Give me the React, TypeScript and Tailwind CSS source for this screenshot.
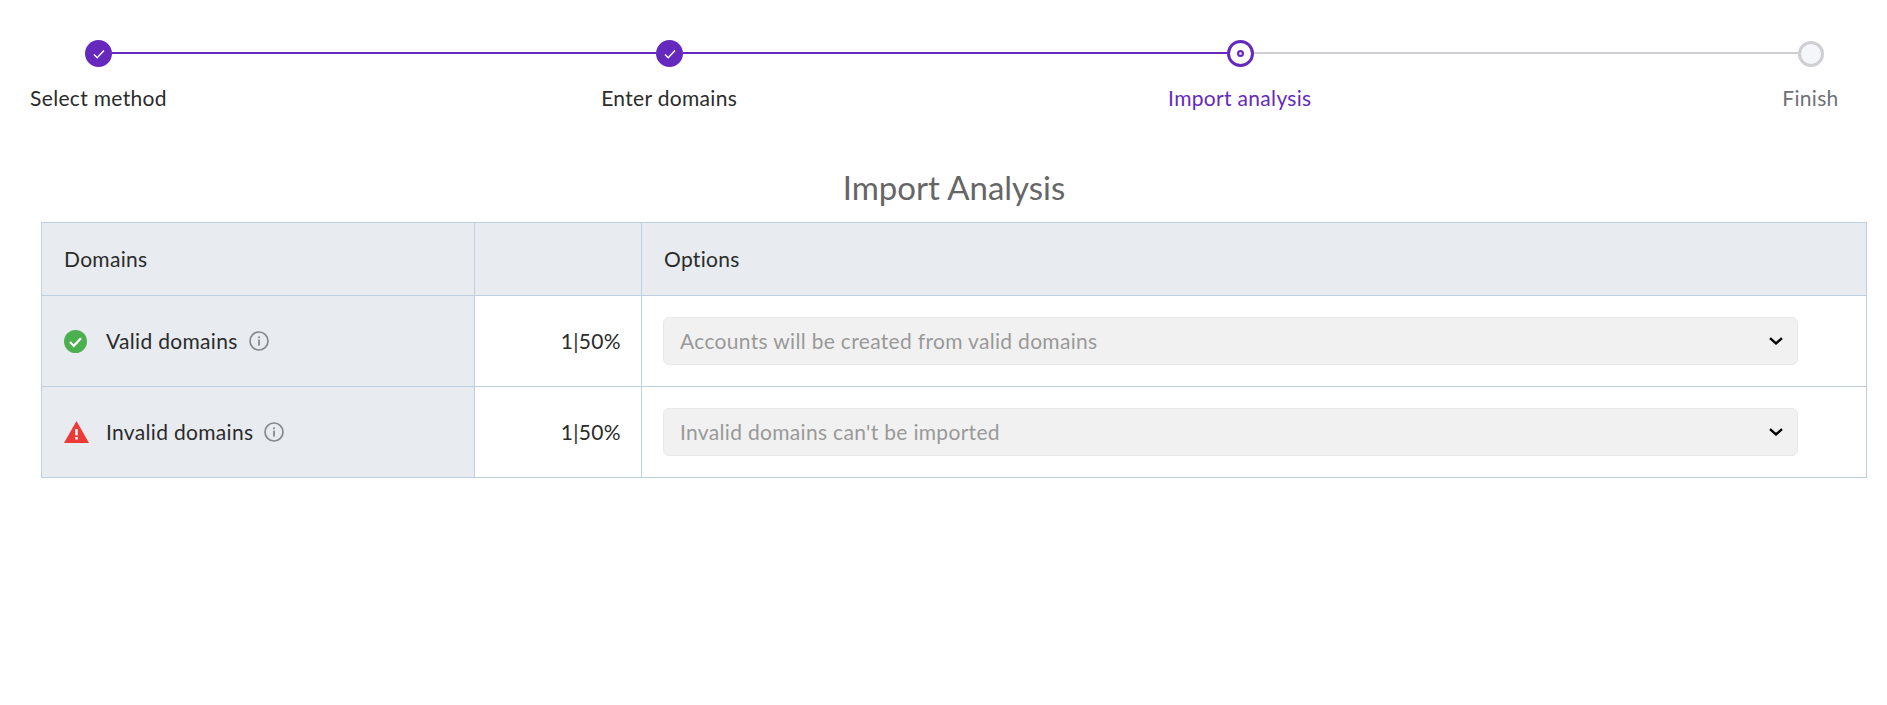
const font = "font-['Lato','Liberation_Sans',sans-serif]";

const steps = [
  { label: "Select method", state: "done" },
  { label: "Enter domains", state: "done" },
  { label: "Import analysis", state: "active" },
  { label: "Finish", state: "todo" },
];

const StepDot = ({ state }: { state: string }) => {
  if (state === "done") {
    return (
      <div className="flex size-[27px] shrink-0 items-center justify-center rounded-full bg-[#6529bd]">
        <svg width="14" height="14" viewBox="0 0 14 14" fill="none" stroke="#fff" strokeWidth="1.4">
          <path d="M2 7.5l3.2 3.2L12 3.6" />
        </svg>
      </div>
    );
  }
  if (state === "active") {
    return (
      <div className="flex size-[27px] shrink-0 items-center justify-center rounded-full border-[3px] border-[#6529bd] bg-white">
        <div className="size-[7px] rounded-full border-2 border-[#6529bd] bg-[#d9c9f0]" />
      </div>
    );
  }
  return <div className="size-[26px] shrink-0 rounded-full border-[3px] border-[#cfcfd3] bg-[#f5f6f9]" />;
};

const Stepper = () => (
  <div className="ml-[30px] w-[1849px] pt-[40px]">
    <div className="flex items-center px-[55px]">
      {steps.map((step, i) => (
        <div key={step.label} className={i < 3 ? "flex flex-1 items-center" : "flex items-center"}>
          <StepDot state={step.state} />
          {i < 3 && (
            <div className={i < 2 ? "mb-[1px] h-[2px] flex-1 bg-[#6529bd]" : "mb-[1px] h-[2px] flex-1 bg-[#cfcfd3]"} />
          )}
        </div>
      ))}
    </div>
    <div className="mt-[19px] flex justify-between">
      {steps.map((step) => (
        <div
          key={step.label}
          className={
            step.state === "active"
              ? "flex w-[137px] justify-center whitespace-nowrap text-[21px] leading-[24px] tracking-[0.32px] text-[#6529bd]"
              : step.state === "todo"
                ? "flex w-[137px] justify-center whitespace-nowrap text-[21px] leading-[24px] tracking-[0.32px] text-[#6c7177]"
                : "flex w-[137px] justify-center whitespace-nowrap text-[21px] leading-[24px] tracking-[0.32px] text-[#2b2b2b]"
          }
        >
          {step.label}
        </div>
      ))}
    </div>
  </div>
);

const InfoIcon = () => (
  <svg width="20" height="20" viewBox="0 0 20 20" fill="none" className="shrink-0">
    <circle cx="10" cy="10" r="9" stroke="#85898f" strokeWidth="1.7" />
    <rect x="9.1" y="8.6" width="1.8" height="6" fill="#85898f" />
    <rect x="9.1" y="5.4" width="1.8" height="1.8" fill="#85898f" />
  </svg>
);

const ValidIcon = () => (
  <svg width="23" height="23" viewBox="0 0 23 23" fill="none" className="shrink-0">
    <circle cx="11.5" cy="11.5" r="11.5" fill="#4caf50" />
    <path d="M6 12l3.8 3.8L17 8.2" stroke="#fff" strokeWidth="2.2" />
  </svg>
);

const InvalidIcon = () => (
  <svg width="25" height="22" viewBox="0 0 25 22" className="shrink-0">
    <path d="M12.5 0L25 22H0z" fill="#ed3a37" />
    <rect x="11.3" y="8" width="2.4" height="6.5" fill="#fff" />
    <rect x="11.3" y="16" width="2.4" height="2.5" fill="#fff" />
  </svg>
);

const Chevron = () => (
  <svg width="14" height="8" viewBox="0 0 14 8" fill="none" stroke="#000" strokeWidth="2.4" className="shrink-0">
    <path d="M1 1.2l6 5.2 6-5.2" />
  </svg>
);

const rows = [
  { name: "Valid domains", icon: <ValidIcon />, option: "Accounts will be created from valid domains" },
  { name: "Invalid domains", icon: <InvalidIcon />, option: "Invalid domains can't be imported" },
];

const ImportTable = () => (
  <div className="ml-[41px] w-[1826px] border border-[#bfcfdf] text-[21px] tracking-[0.32px] text-[#2b2b2b]">
    <div className="grid h-[73px] grid-cols-[433px_167px_1fr] border-b border-[#bfcfdf] bg-[#e8ebf0]">
      <div className="flex items-center border-r border-[#bfcfdf] pl-[22px]">Domains</div>
      <div className="border-r border-[#bfcfdf]" />
      <div className="flex items-center pl-[22px]">Options</div>
    </div>
    {rows.map((row, i) => (
      <div
        key={row.name}
        className={
          i === 0
            ? "grid h-[91px] grid-cols-[433px_167px_1fr] border-b border-[#bfcfdf]"
            : "grid h-[90px] grid-cols-[433px_167px_1fr]"
        }
      >
        <div className="flex items-center border-r border-[#bfcfdf] bg-[#e8ebf0] pl-[22px]">
          <div className="flex w-[42px] shrink-0 items-center">{row.icon}</div>
          <span className="mr-[11px]">{row.name}</span>
          <InfoIcon />
        </div>
        <div className="flex items-center justify-end border-r border-[#bfcfdf] pr-[20px]">1|50%</div>
        <div className="flex items-center pl-[21px]">
          <div className="flex h-[48px] w-[1135px] items-center justify-between rounded-[6px] border border-[#e9e9e9] bg-[#f1f1f1] pl-[16px] pr-[14px] text-[#999999]">
            <span>{row.option}</span>
            <Chevron />
          </div>
        </div>
      </div>
    ))}
  </div>
);

const App = () => {
  return (
    <div className={`h-[705px] w-[1887px] overflow-hidden bg-white ${font}`}>
      <Stepper />
      <h1 className="mt-[57px] ml-[41px] h-[40px] w-[1826px] text-center text-[33px] leading-[40px] font-normal text-[#666666]">
        Import Analysis
      </h1>
      <div className="mt-[15px]">
        <ImportTable />
      </div>
    </div>
  );
};

export default App;
